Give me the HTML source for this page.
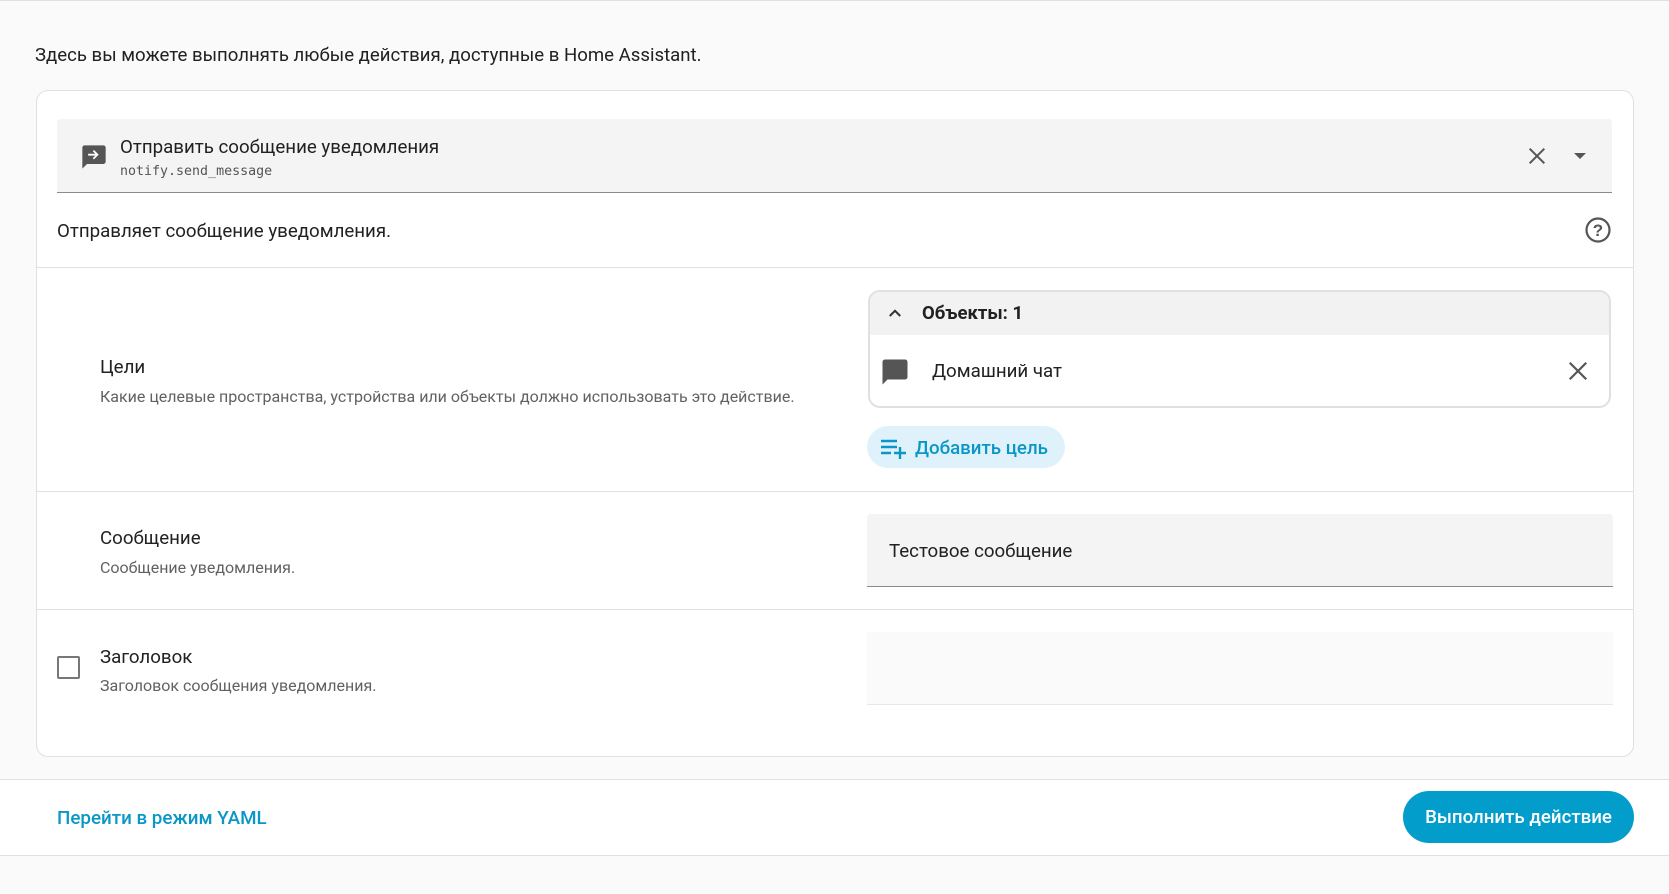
<!DOCTYPE html>
<html><head><meta charset="utf-8"><style>
*{box-sizing:border-box;margin:0;padding:0}
body{width:1669px;height:894px;background:#fafafa;font-family:"Roboto","Liberation Sans",sans-serif;color:#212121;position:relative;overflow:hidden}
.a{position:absolute}
.t{white-space:nowrap}
</style></head><body>
<div class="a" style="left:0;top:0;width:1669px;height:1px;background:#e0e0e0"></div>
<div class="a t" style="left:35px;top:44px;font-size:18.6px">Здесь вы можете выполнять любые действия, доступные в Home Assistant.</div>

<div class="a" style="left:36px;top:90px;width:1598px;height:667px;background:#fff;border:1px solid #e0e0e0;border-radius:12px"></div>

<div class="a" style="left:57px;top:119px;width:1555px;height:74px;background:#f4f4f4;border-radius:4px 4px 0 0;border-bottom:1px solid #8a8a8a"></div>
<svg class="a" style="left:80px;top:143px" width="28" height="28" viewBox="0 0 24 24"><path fill="#555" d="M20 2H4c-1.1 0-2 .9-2 2v18l4-4h14c1.1 0 2-.9 2-2V4c0-1.1-.9-2-2-2z"/><path fill="#fff" d="M12 6l-1.06 1.06L13.1 9.2H7v1.6h6.1l-2.16 2.14L12 14l4-4z"/></svg>
<div class="a t" style="left:120px;top:136px;font-size:18.7px">Отправить сообщение уведомления</div>
<div class="a t" style="left:120px;top:164px;font-size:13.3px;font-family:'DejaVu Sans Mono','Liberation Mono',monospace;color:#555">notify.send_message</div>
<svg class="a" style="left:1526px;top:145px" width="22" height="22" viewBox="0 0 24 24"><path stroke="#555" stroke-width="2.2" d="M4 4l16 16M20 4L4 20"/></svg>
<svg class="a" style="left:1574px;top:153px" width="14" height="8"><path fill="#555" d="M0 0h12L6 6z"/></svg>

<div class="a t" style="left:57px;top:220px;font-size:18.7px">Отправляет сообщение уведомления.</div>
<svg class="a" style="left:1584px;top:216px" width="28" height="28" viewBox="0 0 28 28"><circle cx="14" cy="14" r="11.5" fill="none" stroke="#555" stroke-width="2.2"/><text x="14" y="20" text-anchor="middle" font-size="17" font-weight="bold" font-family="Liberation Sans" fill="#555">?</text></svg>

<div class="a" style="left:37px;top:267px;width:1596px;height:1px;background:#e0e0e0"></div>
<div class="a t" style="left:100px;top:356px;font-size:18.7px">Цели</div>
<div class="a t" style="left:100px;top:387px;font-size:16px;color:#616161">Какие целевые пространства, устройства или объекты должно использовать это действие.</div>

<div class="a" style="left:868px;top:290px;width:743px;height:118px;border:2px solid #e0e0e0;border-radius:12px;overflow:hidden">
 <div style="height:43px;background:#f2f2f2"></div>
</div>
<svg class="a" style="left:886px;top:304px" width="18" height="18" viewBox="0 0 24 24"><path fill="none" stroke="#333" stroke-width="2.6" d="M5 16l7-7 7 7"/></svg>
<div class="a t" style="left:922px;top:302px;font-size:18.5px;font-weight:bold">Объекты: 1</div>
<svg class="a" style="left:880px;top:357px" width="30" height="30" viewBox="0 0 24 24"><path fill="#555" d="M20 2H4c-1.1 0-2 .9-2 2v18l4-4h14c1.1 0 2-.9 2-2V4c0-1.1-.9-2-2-2z"/></svg>
<div class="a t" style="left:932px;top:360px;font-size:18.7px">Домашний чат</div>
<svg class="a" style="left:1567px;top:360px" width="22" height="22" viewBox="0 0 24 24"><path stroke="#555" stroke-width="2.4" d="M3 3l18 18M21 3L3 21"/></svg>

<div class="a" style="left:867px;top:426px;width:198px;height:42px;background:#dff2fb;border-radius:21px"></div>
<svg class="a" style="left:880px;top:436px" width="28" height="24" viewBox="0 0 28 24"><path stroke="#0a97c7" stroke-width="2.4" d="M1 5h16M1 11h16M1 17h10M14 17h12M20 11v12"/></svg>
<div class="a t" style="left:915px;top:437px;font-size:18.7px;font-weight:500;color:#0a97c7">Добавить цель</div>

<div class="a" style="left:37px;top:491px;width:1596px;height:1px;background:#e0e0e0"></div>
<div class="a t" style="left:100px;top:527px;font-size:18.7px">Сообщение</div>
<div class="a t" style="left:100px;top:558px;font-size:16px;color:#616161">Сообщение уведомления.</div>
<div class="a" style="left:867px;top:514px;width:746px;height:73px;background:#f4f4f4;border-radius:4px 4px 0 0;border-bottom:1px solid #8a8a8a"></div>
<div class="a t" style="left:889px;top:540px;font-size:18.7px">Тестовое сообщение</div>

<div class="a" style="left:37px;top:609px;width:1596px;height:1px;background:#e0e0e0"></div>
<div class="a" style="left:57px;top:656px;width:23px;height:23px;border:2px solid #777;border-radius:2px"></div>
<div class="a t" style="left:100px;top:646px;font-size:18.7px">Заголовок</div>
<div class="a t" style="left:100px;top:676px;font-size:16px;color:#616161">Заголовок сообщения уведомления.</div>
<div class="a" style="left:867px;top:632px;width:746px;height:73px;background:#fafafa;border-bottom:1px solid #e8e8e8"></div>

<div class="a" style="left:0;top:779px;width:1669px;height:77px;background:#fff;border-top:1px solid #e0e0e0;border-bottom:1px solid #e0e0e0"></div>
<div class="a t" style="left:57px;top:807px;font-size:18.8px;font-weight:500;color:#0a97c7">Перейти в режим YAML</div>
<div class="a t" style="left:1403px;top:791px;width:231px;height:52px;background:#039dcb;border-radius:26px;color:#fff;font-size:18.7px;font-weight:500;text-align:center;line-height:52px">Выполнить действие</div>
</body></html>
